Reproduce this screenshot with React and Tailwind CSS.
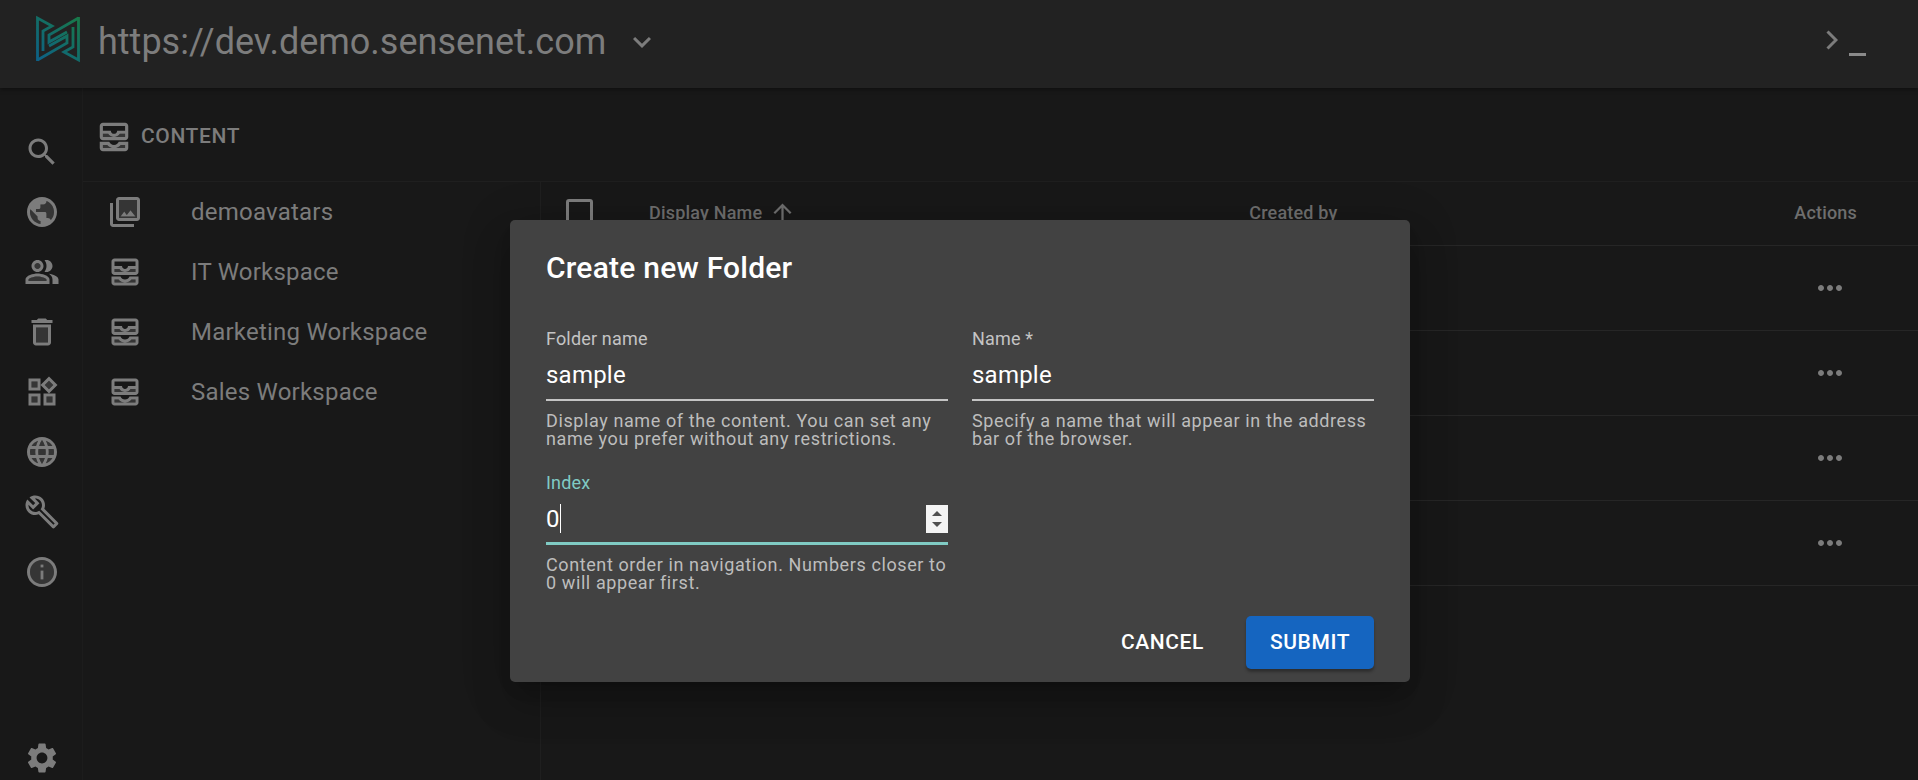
const T = 0.3;
const Icon = ({ size = 36, children, className = "" }) => (
  <svg width={size} height={size} viewBox="0 0 24 24" fill="currentColor" className={`shrink-0 ${className}`}>
    {children}
  </svg>
);
const Search = () => <Icon><path d="M15.5 14h-.79l-.28-.27C15.41 12.59 16 11.11 16 9.5 16 5.91 13.09 3 9.5 3S3 5.91 3 9.5 5.91 16 9.5 16c1.61 0 3.09-.59 4.23-1.57l.27.28v.79l5 4.99L20.49 19l-4.99-5zm-6 0C7.01 14 5 11.99 5 9.5S7.01 5 9.5 5 14 7.01 14 9.5 11.99 14 9.5 14z" /></Icon>;
const Public = () => <Icon><path opacity={T} d="M14.99 4.59V5c0 1.1-.9 2-2 2h-2v2c0 .55-.45 1-1 1h-2v2h6c.55 0 1 .45 1 1v3h1c.89 0 1.64.59 1.9 1.4C19.19 15.98 20 14.08 20 12c0-3.35-2.08-6.23-5.01-7.41zM8.99 16v-1l-4.78-4.78C4.08 10.79 4 11.39 4 12c0 4.07 3.06 7.43 6.99 7.93V18c-1.1 0-2-.9-2-2z" /><path d="M12 2C6.48 2 2 6.48 2 12s4.48 10 10 10 10-4.48 10-10S17.52 2 12 2zM4 12c0-.61.08-1.21.21-1.78L8.99 15v1c0 1.1.9 2 2 2v1.93C7.06 19.43 4 16.07 4 12zm13.89 5.4c-.26-.81-1-1.4-1.9-1.4h-1v-3c0-.55-.45-1-1-1h-6v-2h2c.55 0 1-.45 1-1V7h2c1.1 0 2-.9 2-2v-.41C17.92 5.77 20 8.65 20 12c0 2.08-.81 3.98-2.11 5.4z" /></Icon>;
const People = () => <Icon><circle opacity={T} cx="9" cy="8" r="2" /><path opacity={T} d="M9 15c-2.7 0-5.8 1.29-6 2.01V18h12v-1c-.2-.71-3.3-2-6-2z" /><path d="M16.67 13.13C18.04 14.06 19 15.32 19 17v3h4v-3c0-2.18-3.57-3.47-6.33-3.87zM15 12c2.21 0 4-1.79 4-4s-1.79-4-4-4c-.47 0-.91.1-1.33.24C14.5 5.27 15 6.58 15 8s-.5 2.73-1.33 3.76c.42.14.86.24 1.33.24zM9 12c2.21 0 4-1.79 4-4s-1.79-4-4-4-4 1.79-4 4 1.79 4 4 4zm0-6c1.1 0 2 .9 2 2s-.9 2-2 2-2-.9-2-2 .9-2 2-2zM9 13c-2.67 0-8 1.34-8 4v3h16v-3c0-2.66-5.33-4-8-4zm6 5H3v-.99C3.2 16.29 6.3 15 9 15s5.8 1.29 6 2v1z" /></Icon>;
const Trash = () => <Icon><path opacity={T} d="M8 9h8v10H8z" /><path d="M15.5 4l-1-1h-5l-1 1H5v2h14V4zM6 19c0 1.1.9 2 2 2h8c1.1 0 2-.9 2-2V7H6v12zM8 9h8v10H8V9z" /></Icon>;
const Widgets = () => <Icon><path opacity={T} d="M5 5h4v4H5zm10 10h4v4h-4zM5 15h4v4H5zM16.66 4.52l-2.83 2.82 2.83 2.83 2.83-2.83z" /><path d="M16.66 1.69L11 7.34 16.66 13l5.66-5.66-5.66-5.65zm-2.83 5.65l2.83-2.83 2.83 2.83-2.83 2.83-2.83-2.83zM3 3v8h8V3H3zm6 6H5V5h4v4zM3 21h8v-8H3v8zm2-6h4v4H5v-4zm8-2v8h8v-8h-8zm6 6h-4v-4h4v4z" /></Icon>;
const Language = () => <Icon><path opacity={T} d="M5.08 8h2.95c.32-1.25.78-2.45 1.38-3.56-1.84.63-3.37 1.9-4.33 3.56zm2.42 4c0-.68.06-1.34.14-2H4.26c-.16.64-.26 1.31-.26 2s.1 1.36.26 2h3.38c-.08-.66-.14-1.32-.14-2zm-2.42 4c.96 1.66 2.49 2.93 4.33 3.56-.6-1.11-1.06-2.31-1.38-3.56H5.08zM12 4.04c-.83 1.2-1.48 2.53-1.91 3.96h3.82c-.43-1.43-1.08-2.76-1.91-3.96zM18.92 8c-.96-1.65-2.49-2.93-4.33-3.56.6 1.11 1.06 2.31 1.38 3.56h2.95zM12 19.96c.83-1.2 1.48-2.53 1.91-3.96h-3.82c.43 1.43 1.08 2.76 1.91 3.96zm2.59-.4c1.84-.63 3.37-1.91 4.33-3.56h-2.95c-.32 1.25-.78 2.45-1.38 3.56zM19.74 10h-3.38c.08.66.14 1.32.14 2s-.06 1.34-.14 2h3.38c.16-.64.26-1.31.26-2s-.1-1.36-.26-2zM9.66 10c-.09.65-.16 1.32-.16 2s.07 1.34.16 2h4.68c.09-.66.16-1.32.16-2s-.07-1.35-.16-2H9.66z" /><path d="M11.99 2C6.47 2 2 6.48 2 12s4.47 10 9.99 10C17.52 22 22 17.52 22 12S17.52 2 11.99 2zm6.93 6h-2.95c-.32-1.25-.78-2.45-1.38-3.56 1.84.63 3.37 1.91 4.33 3.56zM12 4.04c.83 1.2 1.48 2.53 1.91 3.96h-3.82c.43-1.43 1.08-2.76 1.91-3.96zM4.26 14C4.1 13.36 4 12.69 4 12s.1-1.36.26-2h3.38c-.08.66-.14 1.32-.14 2s.06 1.34.14 2H4.26zm.82 2h2.95c.32 1.25.78 2.45 1.38 3.56-1.84-.63-3.37-1.9-4.33-3.56zm2.95-8H5.08c.96-1.66 2.49-2.93 4.33-3.56C8.81 5.55 8.35 6.75 8.03 8zM12 19.96c-.83-1.2-1.48-2.53-1.91-3.96h3.82c-.43 1.43-1.08 2.76-1.91 3.96zM14.34 14H9.66c-.09-.66-.16-1.32-.16-2s.07-1.35.16-2h4.68c.09.65.16 1.32.16 2s-.07 1.34-.16 2zm.25 5.56c.6-1.11 1.06-2.31 1.38-3.56h2.95c-.96 1.65-2.49 2.93-4.33 3.56zM16.36 14c.08-.66.14-1.32.14-2s-.06-1.34-.14-2h3.38c.16.64.26 1.31.26 2s-.1 1.36-.26 2h-3.38z" /></Icon>;
const Build = () => <Icon><path d="M22.61 18.97L13.54 9.9c.93-2.34.45-5.1-1.44-7C9.8.6 6.22.39 3.67 2.25L7.5 6.08 6.08 7.5 2.25 3.67C.39 6.21.6 9.79 2.9 12.1c1.86 1.86 4.57 2.35 6.89 1.48l9.11 9.11c.39.39 1.02.39 1.41 0l2.3-2.3c.4-.38.4-1.02 0-1.42zm-3 1.6l-9.46-9.46c-.61.45-1.29.72-2 .82-1.36.2-2.79-.21-3.83-1.25C3.37 9.73 2.93 8.48 3 7.24l3.09 3.09 4.24-4.24-3.09-3.09c1.24-.07 2.49.37 3.44 1.31 1.08 1.08 1.49 2.57 1.24 3.96-.12.71-.42 1.37-.88 1.96l9.45 9.45-.88.89z" /></Icon>;
const Info = () => <Icon><path opacity={T} d="M12 4c-4.41 0-8 3.59-8 8s3.59 8 8 8 8-3.59 8-8-3.59-8-8-8zm1 13h-2v-6h2v6zm0-8h-2V7h2v2z" /><path d="M11 7h2v2h-2zm0 4h2v6h-2zm1-9C6.48 2 2 6.48 2 12s4.48 10 10 10 10-4.48 10-10S17.52 2 12 2zm0 18c-4.41 0-8-3.59-8-8s3.59-8 8-8 8 3.59 8 8-3.59 8-8 8z" /></Icon>;
const Settings = () => <Icon><path d="M19.14 12.94c.04-.3.06-.61.06-.94 0-.32-.02-.64-.07-.94l2.03-1.58c.18-.14.23-.41.12-.61l-1.92-3.32c-.12-.22-.37-.29-.59-.22l-2.39.96c-.5-.38-1.03-.7-1.62-.94l-.36-2.54c-.04-.24-.24-.41-.48-.41h-3.84c-.24 0-.43.17-.47.41l-.36 2.54c-.59.24-1.13.57-1.62.94l-2.39-.96c-.22-.08-.47 0-.59.22L2.74 8.87c-.12.21-.08.47.12.61l2.03 1.58c-.05.3-.09.63-.09.94s.02.64.07.94l-2.03 1.58c-.18.14-.23.41-.12.61l1.92 3.32c.12.22.37.29.59.22l2.39-.96c.5.38 1.03.7 1.62.94l.36 2.54c.05.24.24.41.48.41h3.84c.24 0 .44-.17.47-.41l.36-2.54c.59-.24 1.13-.56 1.62-.94l2.39.96c.22.08.47 0 .59-.22l1.92-3.32c.12-.22.07-.47-.12-.61l-2.01-1.58zM12 15.6c-1.98 0-3.6-1.62-3.6-3.6s1.62-3.6 3.6-3.6 3.6 1.62 3.6 3.6-1.62 3.6-3.6 3.6z" /></Icon>;
const Inbox = ({ size = 36 }) => <Icon size={size}>
  <path opacity={T} d="M5 10h3.3c.7 1.2 2.1 2 3.7 2s3-.8 3.7-2H19v2H5zM5 17h2.7c.9 1.2 2.5 2 4.3 2s3.4-.8 4.3-2H19v2H5z" />
  <path fillRule="evenodd" d="M19 3H5c-1.1 0-2 .9-2 2v7c0 1.1.9 2 2 2h14c1.1 0 2-.9 2-2V5c0-1.1-.9-2-2-2zm0 2v3h-5c0 1.1-.9 2-2 2s-2-.9-2-2H5V5h14zM5 12v-2h3.3c.7 1.2 2.1 2 3.7 2s3-.8 3.7-2H19v2H5z" />
  <path fillRule="evenodd" d="M15 15h6v4c0 1.1-.9 2-2 2H5c-1.1 0-2-.9-2-2v-4h6c.5 1.2 1.6 2 3 2s2.5-.8 3-2zM5 17v2h14v-2h-2.7c-.9 1.2-2.5 2-4.3 2s-3.4-.8-4.3-2H5z" />
</Icon>;
const Photos = () => <Icon><path opacity={T} d="M8 16h12V4H8v12zm3.5-4.33l1.69 2.26 2.48-3.09L19 15H9l2.5-3.33z" /><path d="M8 2c-1.1 0-2 .9-2 2v12c0 1.1.9 2 2 2h12c1.1 0 2-.9 2-2V4c0-1.1-.9-2-2-2H8zm12 14H8V4h12v12zm-4.33-5.17l-2.48 3.09-1.69-2.25L9 15h10zM4 22h14v-2H4V6H2v14c0 1.1.9 2 2 2z" /></Icon>;
const More = () => <Icon><path d="M6 10c-1.1 0-2 .9-2 2s.9 2 2 2 2-.9 2-2-.9-2-2-2zm12 0c-1.1 0-2 .9-2 2s.9 2 2 2 2-.9 2-2-.9-2-2-2zm-6 0c-1.1 0-2 .9-2 2s.9 2 2 2 2-.9 2-2-.9-2-2-2z" /></Icon>;

const Logo = () => (
  <svg width="44" height="48" viewBox="0 0 44 48" fill="none" className="shrink-0 -translate-y-[5px]">
    <defs>
      <linearGradient id="lg" x1="0" y1="48" x2="44" y2="0" gradientUnits="userSpaceOnUse">
        <stop offset="0" stopColor="#0c5f8a" />
        <stop offset="1" stopColor="#197a46" />
      </linearGradient>
    </defs>
    <g stroke="url(#lg)" strokeWidth="2.8" strokeLinejoin="miter">
      <path d="M1.5 46V3L16 11L7 16V36" />
      <path d="M42.5 2V45L28 37L37 32V12" />
      <path d="M42.5 3L13 20V27L31 17" />
      <path d="M1.5 45L31 28V21L13 31" />
    </g>
  </svg>
);

const Field = ({ label, value, help, focused, spin }) => (
  <div className="flex flex-col">
    <div className={`h-[20px] text-[18px] leading-[20px] tracking-[0.17px] ${focused ? "text-[#80cbc4]" : "text-[#c4c4c4]"}`}>{label}</div>
    <div className="relative mt-[11px] h-[30px] flex items-center text-[24px] leading-[30px] tracking-[0.225px] text-white">
      {value}
      {focused && <span className="w-px h-[29px] bg-white" />}
      {spin && (
        <span className="absolute right-0 top-[1px] w-[22px] h-[28px] bg-[#f4f4f4] flex flex-col items-center justify-center gap-[6px]">
          <span className="w-0 h-0 border-x-[5.5px] border-x-transparent border-b-[5.5px] border-b-[#505050]" />
          <span className="w-0 h-0 border-x-[5.5px] border-x-transparent border-t-[5.5px] border-t-[#505050]" />
        </span>
      )}
    </div>
    <div className={`${focused ? "mt-[8px] h-[3px] bg-[#80cbc4]" : "mt-[9px] h-[1.5px] bg-[#c4c4c4]"}`} />
    <div className="mt-[11px] text-[18px] leading-[18px] tracking-[0.6px] text-[#bdbdbd]">{help}</div>
  </div>
);

const rail = [Search, Public, People, Trash, Widgets, Language, Build, Info];
const tree = [
  ["demoavatars", Photos],
  ["IT Workspace", Inbox],
  ["Marketing Workspace", Inbox],
  ["Sales Workspace", Inbox],
];

export default function App() {
  return (
    <div className="relative w-[1918px] h-[780px] overflow-hidden bg-[#181818] text-[#7c7c7c] font-['Roboto',sans-serif]">
      <header className="relative z-10 h-[88px] bg-[#222222] shadow-[0_2px_4px_rgba(0,0,0,0.35)] flex items-center pl-[36px] pr-[52px]">
        <Logo />
        <div className="ml-[18px] text-[36px] leading-[44px] text-[#7d7d7d] -translate-y-[2px]">https://dev.demo.sensenet.com</div>
        <svg width="36" height="36" viewBox="0 0 24 24" fill="currentColor" className="ml-[18px] -translate-y-[2px]"><path d="M7.41 8.59L12 13.17l4.59-4.58L18 10l-6 6-6-6 1.41-1.41z" /></svg>
        <div className="ml-auto flex items-start gap-[11px] -translate-y-[1px]">
          <svg width="12" height="20" viewBox="0 0 12 20" fill="none" stroke="currentColor" strokeWidth="3"><path d="M1.5 1.5L10 10L1.5 18.5" /></svg>
          <span className="mt-[23px] w-[17px] h-[3px] bg-[#8a8a8a]" />
        </div>
      </header>
      <div className="flex h-[692px]">
        <nav className="w-[83px] shrink-0 border-r border-[#1c1c1c] flex flex-col items-center pl-[1px] pt-[34px] pb-[4px]">
          {rail.map((I, i) => (
            <div key={i} className="h-[60px] flex items-center justify-center"><I /></div>
          ))}
          <div className="mt-auto"><Settings /></div>
        </nav>
        <main className="flex-1 flex flex-col min-w-0">
          <div className="h-[94px] shrink-0 border-b border-[#1f1f1f] flex items-center pl-[12px] pt-[4px] gap-[8px]">
            <Inbox size={38} />
            <span className="text-[21px] font-medium tracking-[0.6px] text-[#7c7c7c]">CONTENT</span>
          </div>
          <div className="flex flex-1 min-h-0">
            <div className="w-[458px] shrink-0 border-r border-[#1f1f1f]">
              {tree.map(([name, I]) => (
                <div key={name} className="h-[60px] flex items-center pl-[24px]">
                  <I />
                  <span className="ml-[48px] text-[24px] tracking-[0.225px] text-[#7c7c7c]">{name}</span>
                </div>
              ))}
            </div>
            <div className="flex-1 min-w-0">
              <div className="h-[64px] border-b border-[#262626] flex items-center pl-[25px] pr-[61px] text-[18px] tracking-[0.19px] font-medium text-[#6e6e6e]">
                <span className="w-[27px] h-[27px] border-[3px] border-[#7c7c7c] rounded-[3px] -translate-y-[1px]" />
                <span className="ml-[56px] -translate-y-[1px]">Display Name</span>
                <svg width="27" height="27" viewBox="0 0 24 24" fill="currentColor" className="ml-[7px] -translate-y-[1px]"><path d="M4 12l1.41 1.41L11 7.83V20h2V7.83l5.58 5.59L20 12l-8-8-8 8z" /></svg>
                <span className="ml-[453px] -translate-y-[1px]">Created by</span>
                <span className="ml-auto -translate-y-[1px]">Actions</span>
              </div>
              {[0, 1, 2, 3].map((r) => (
                <div key={r} className="h-[85px] border-b border-[#262626] flex items-center justify-end pr-[70px]"><More /></div>
              ))}
            </div>
          </div>
        </main>
      </div>

      <div className="absolute inset-0 z-20 flex items-start pl-[510px] pt-[220px]">
        <div className="w-[900px] h-[462px] rounded-[5px] bg-[#424242] shadow-[0_11px_15px_-7px_rgba(0,0,0,0.2),0_24px_38px_3px_rgba(0,0,0,0.14),0_9px_46px_8px_rgba(0,0,0,0.12)] px-[36px] pt-[29px] flex flex-col">
          <h2 className="text-[30px] leading-[38px] tracking-[0.225px] font-medium text-white">Create new Folder</h2>
          <div className="mt-[42px] grid grid-cols-2 gap-x-[24px] gap-y-[25px] w-[828px]">
            <Field label="Folder name" value="sample" help="Display name of the content. You can set any name you prefer without any restrictions." />
            <Field label="Name *" value="sample" help="Specify a name that will appear in the address bar of the browser." />
            <Field label="Index" value="0" focused spin help="Content order in navigation. Numbers closer to 0 will appear first." />
          </div>
          <div className="mt-auto mb-[13px] w-[828px] flex justify-end items-center">
            <span className="text-[21px] font-medium tracking-[0.6px] text-white mr-[42px]">CANCEL</span>
            <span className="w-[128px] h-[53px] rounded-[5px] bg-[#1565c0] flex items-center justify-center text-[21px] font-medium tracking-[0.6px] text-white shadow-[0_3px_3px_rgba(0,0,0,0.3)]">SUBMIT</span>
          </div>
        </div>
      </div>
    </div>
  );
}
